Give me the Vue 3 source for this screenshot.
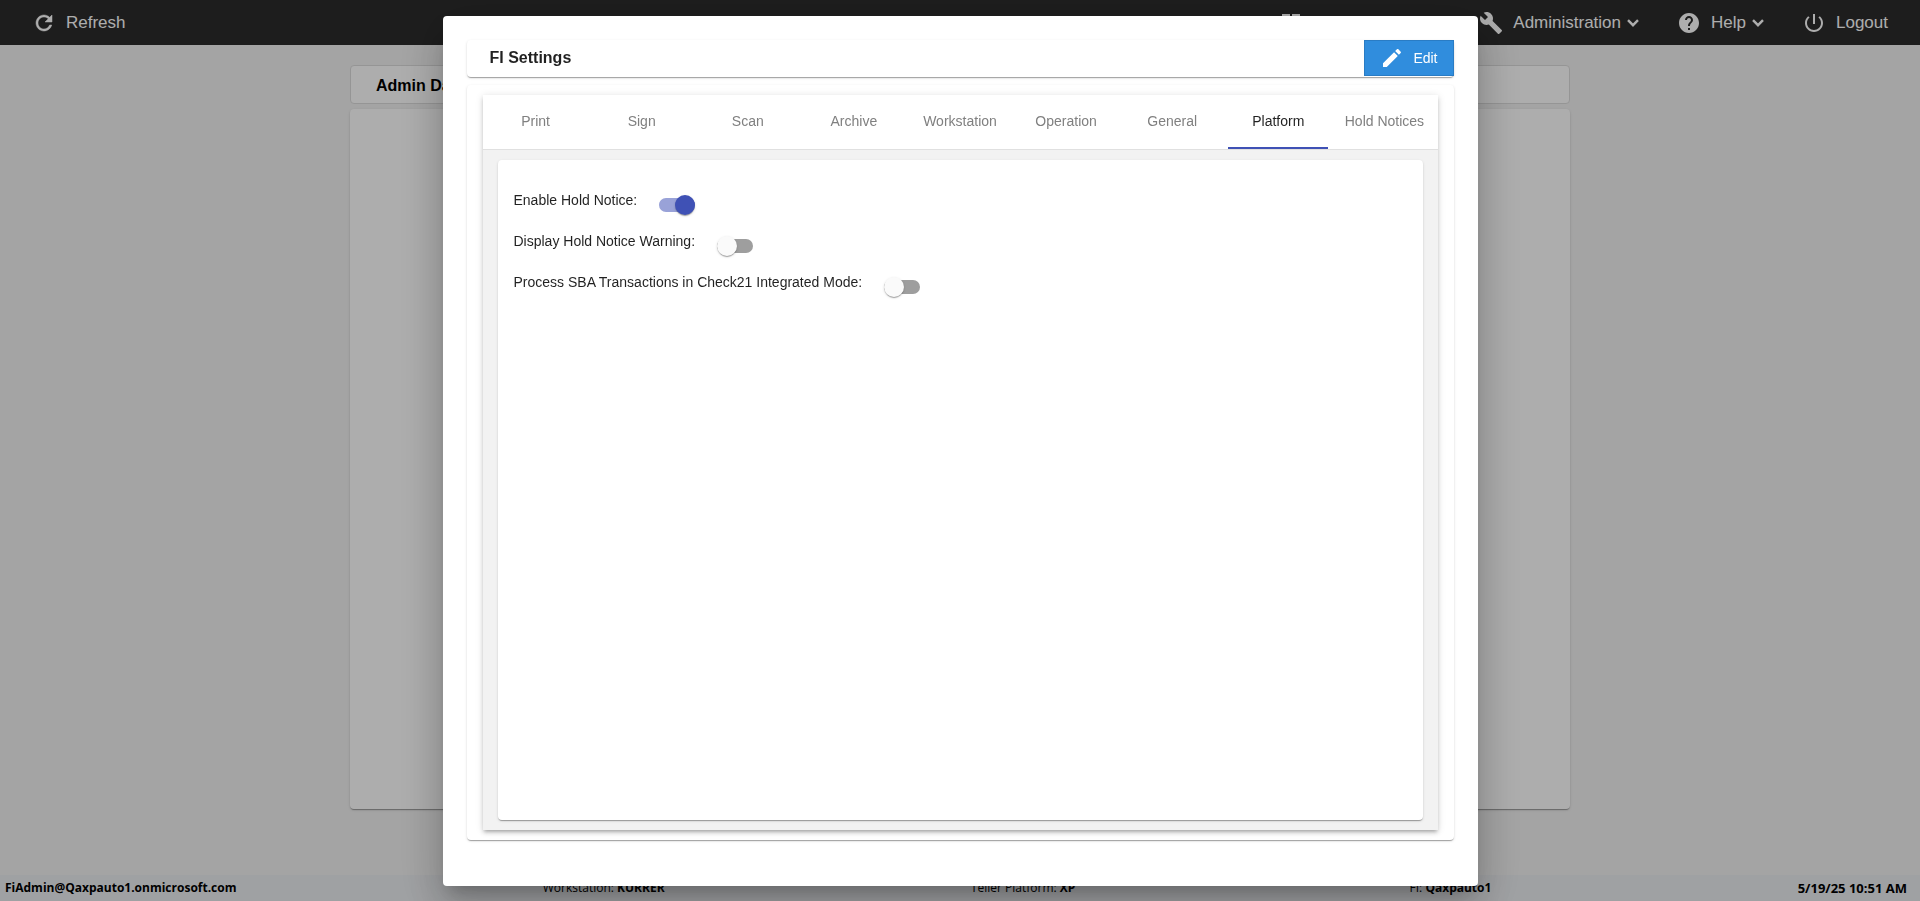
<template>
  <div class="app">
    <header class="topbar">
      <button class="topbar-item" type="button">
        <svg class="topbar-icon topbar-icon--bold" viewBox="0 0 24 24"><path :d="icons.refresh" /></svg>
        <span>Refresh</span>
      </button>
      <nav class="topbar-nav">
        <button v-for="item in menu" :key="item.label" class="topbar-item" type="button">
          <svg class="topbar-icon" viewBox="0 0 24 24"><path :d="icons[item.icon]" /></svg>
          <span>{{ item.label }}</span>
          <svg v-if="item.dropdown" class="topbar-chevron" viewBox="0 0 12 8">
            <path d="M1 1.200 6 6.200 11 1.200" />
          </svg>
        </button>
      </nav>
    </header>

    <main class="page">
      <h1 class="page-title">Admin Dashboard</h1>
      <div class="page-body"></div>
    </main>

    <footer class="statusbar">
      <b>FiAdmin@Qaxpauto1.onmicrosoft.com</b>
      <span>Workstation: <b>KURRER</b></span>
      <span>Teller Platform: <b>XP</b></span>
      <span class="statusbar-fi">FI: <b>Qaxpauto1</b></span>
      <b class="statusbar-time">5/19/25 10:51 AM</b>
    </footer>

    <div class="overlay">
      <section class="dialog" role="dialog" aria-labelledby="dialog-title">
        <div class="dialog-header">
          <h2 id="dialog-title" class="dialog-title">FI Settings</h2>
          <button class="edit-button" type="button">
            <svg class="edit-icon" viewBox="0 0 24 24"><path :d="icons.edit" /></svg>
            <span>Edit</span>
          </button>
        </div>

        <div class="dialog-body">
          <div class="tabs">
            <div class="tab-list" role="tablist">
              <button
                v-for="tab in tabs"
                :key="tab"
                class="tab"
                :class="{ 'tab--active': tab === activeTab }"
                type="button"
                role="tab"
                :aria-selected="tab === activeTab"
                @click="activeTab = tab"
              >
                {{ tab }}
              </button>
            </div>
            <div class="tab-content">
              <div class="settings">
                <template v-if="activeTab === 'Platform'">
                  <div v-for="setting in settings" :key="setting.id" class="setting">
                    <label :for="setting.id">{{ setting.label }}</label>
                    <input :id="setting.id" v-model="setting.enabled" class="toggle" type="checkbox" role="switch" />
                  </div>
                </template>
              </div>
            </div>
          </div>
        </div>
      </section>
    </div>
  </div>
</template>

<script setup>
import { reactive, ref } from 'vue';

const icons = {
  refresh: 'M17.65 6.35C16.2 4.9 14.21 4 12 4c-4.42 0-7.99 3.58-7.99 8s3.57 8 7.99 8c3.73 0 6.84-2.55 7.73-6h-2.08c-.82 2.33-3.04 4-5.65 4-3.31 0-6-2.69-6-6s2.69-6 6-6c1.66 0 3.14.69 4.22 1.78L13 11h7V4l-2.35 2.35z',
  dashboard: 'M3 13h8V3H3v10zm0 8h8v-6H3v6zm10 0h8V11h-8v10zm0-18v6h8V3h-8z',
  build: 'M22.7 19l-9.1-9.1c.9-2.3.4-5-1.500-6.900-2-2-5-2.400-7.400-1.300L9 6 6 9 1.600 4.700C.4 7.100.9 10.100 2.900 12.100c1.900 1.900 4.600 2.400 6.900 1.500l9.100 9.100c.4.4 1 .4 1.400 0l2.300-2.300c.5-.4.5-1.100.1-1.400z',
  help: 'M12 2C6.48 2 2 6.480 2 12s4.480 10 10 10 10-4.480 10-10S17.520 2 12 2zm1 17h-2v-2h2v2zm2.070-7.750l-.9.92C13.450 12.900 13 13.500 13 15h-2v-.5c0-1.100.45-2.100 1.170-2.830l1.240-1.260c.37-.36.59-.86.59-1.410 0-1.100-.9-2-2-2s-2 .9-2 2H8c0-2.210 1.790-4 4-4s4 1.790 4 4c0 .88-.36 1.680-.93 2.250z',
  power: 'M13 3h-2v10h2V3zm4.830 2.170l-1.420 1.420C17.990 7.860 19 9.810 19 12c0 3.870-3.130 7-7 7s-7-3.130-7-7c0-2.190 1.010-4.140 2.580-5.420L6.170 5.170C4.230 6.820 3 9.260 3 12c0 4.970 4.030 9 9 9s9-4.030 9-9c0-2.740-1.230-5.180-3.170-6.830z',
  edit: 'M3 17.250V21h3.750L17.810 9.940l-3.750-3.750L3 17.250zM20.710 7.040c.39-.39.39-1.020 0-1.410l-2.340-2.340c-.39-.39-1.020-.39-1.410 0l-1.830 1.830 3.750 3.750 1.830-1.830z'
};

const menu = [
  { label: 'Teller Dashboard', icon: 'dashboard' },
  { label: 'Administration', icon: 'build', dropdown: true },
  { label: 'Help', icon: 'help', dropdown: true },
  { label: 'Logout', icon: 'power' }
];

const tabs = ['Print', 'Sign', 'Scan', 'Archive', 'Workstation', 'Operation', 'General', 'Platform', 'Hold Notices'];
const activeTab = ref('Platform');

const settings = reactive([
  { id: 'hold-notice', label: 'Enable Hold Notice:', enabled: true },
  { id: 'hold-notice-warning', label: 'Display Hold Notice Warning:', enabled: false },
  { id: 'sba-transactions', label: 'Process SBA Transactions in Check21 Integrated Mode:', enabled: false }
]);
</script>

<style>
body {
  margin: 0;
}
</style>

<style scoped>
.app {
  display: flex;
  flex-direction: column;
  min-height: 100vh;
  background-color: #f2f2f2;
  font-family: "Liberation Sans", Arial, sans-serif;
  color: rgba(0, 0, 0, 0.87);
}

button {
  border: 0;
  background: none;
  font-family: inherit;
  cursor: pointer;
}

.topbar {
  display: flex;
  justify-content: space-between;
  height: 45px;
  padding: 0 32px;
  background-color: #2c2c2c;
}

.topbar-nav {
  display: flex;
  gap: 38px;
}

.topbar-item {
  display: flex;
  align-items: center;
  padding: 0;
  font-size: 17px;
  color: #ffffff;
}

.topbar-icon {
  width: 24px;
  height: 24px;
  margin-right: 10px;
  fill: currentColor;
}

.topbar-icon--bold {
  stroke: currentColor;
  stroke-width: 0.5;
}

.topbar-chevron {
  width: 12px;
  height: 8px;
  margin-left: 6px;
  fill: none;
  stroke: currentColor;
  stroke-width: 2.4;
}

.page {
  display: flex;
  flex: 1;
  flex-direction: column;
  gap: 5px;
  width: 100%;
  max-width: 1220px;
  margin: 0 auto;
  padding: 20px 0 66px;
}

.page-title {
  box-sizing: border-box;
  height: 39px;
  margin: 0;
  padding: 0 25px;
  border: 1px solid #dcdcdc;
  border-radius: 4px;
  background-color: #ffffff;
  font-size: 16px;
  line-height: 40px;
  color: #000000;
}

.page-body {
  flex: 1;
  border-radius: 4px;
  background-color: #ffffff;
  box-shadow: 0 2px 1px -1px rgba(0, 0, 0, 0.2), 0 1px 1px 0 rgba(0, 0, 0, 0.14), 0 1px 3px 0 rgba(0, 0, 0, 0.12);
}

.statusbar {
  display: flex;
  justify-content: space-between;
  height: 26px;
  padding: 0 13px 0 5px;
  background-color: #ebedf0;
  font-family: "Open Sans", "Noto Sans", sans-serif;
  font-size: 12px;
  line-height: 26px;
  color: #000000;
}

.statusbar-fi {
  margin-left: 28px;
}

.statusbar-time {
  font-size: 13px;
}

.overlay {
  position: fixed;
  inset: 0;
  display: flex;
  align-items: center;
  justify-content: center;
  background-color: rgba(0, 0, 0, 0.32);
}

.dialog {
  box-sizing: border-box;
  display: flex;
  flex-direction: column;
  gap: 8px;
  width: 100%;
  max-width: 1035px;
  height: calc(100vh - 31px);
  padding: 24px 24px 46px;
  border-radius: 4px;
  background-color: #ffffff;
  box-shadow: 0 11px 15px -7px rgba(0, 0, 0, 0.2), 0 24px 38px 3px rgba(0, 0, 0, 0.14), 0 9px 46px 8px rgba(0, 0, 0, 0.12);
}

.dialog-header,
.dialog-body,
.settings {
  border-radius: 4px;
  background-color: #ffffff;
  box-shadow: 0 2px 1px -1px rgba(0, 0, 0, 0.2), 0 1px 1px 0 rgba(0, 0, 0, 0.14), 0 1px 3px 0 rgba(0, 0, 0, 0.12);
}

.dialog-header {
  display: flex;
  align-items: flex-start;
  justify-content: space-between;
  height: 37px;
  padding-left: 23px;
}

.dialog-title {
  margin: 0;
  font-size: 16px;
  line-height: 36px;
}

.edit-button {
  display: flex;
  align-items: center;
  gap: 9px;
  height: 36px;
  padding: 0 15px;
  border: 1px solid #2a7cc4;
  background-color: #308ddd;
  font-size: 14px;
  color: #ffffff;
}

.edit-icon {
  width: 24px;
  height: 24px;
  fill: currentColor;
}

.dialog-body {
  display: flex;
  flex: 1;
  padding: 10px 16px;
}

.tabs {
  display: flex;
  flex: 1;
  flex-direction: column;
  background-color: #f2f2f2;
  box-shadow: 0 3px 3px -2px rgba(0, 0, 0, 0.2), 0 3px 4px 0 rgba(0, 0, 0, 0.14), 0 1px 8px 0 rgba(0, 0, 0, 0.12);
}

.tab-list {
  display: flex;
  height: 54px;
  border-bottom: 1px solid #e0e0e0;
  background-color: #ffffff;
}

.tab {
  flex: 1 1 0;
  min-width: 0;
  margin: 0 3px;
  padding: 0;
  border-bottom: 2px solid transparent;
  font-size: 14px;
  color: #808080;
  white-space: nowrap;
}

.tab--active {
  border-bottom-color: #3f51b5;
  color: rgba(0, 0, 0, 0.87);
}

.tab-content {
  display: flex;
  flex: 1;
  padding: 10px 15px;
}

.settings {
  display: flex;
  flex: 1;
  flex-direction: column;
  padding: 30px 16px;
}

.setting {
  display: flex;
  align-items: flex-start;
  gap: 22px;
  height: 41px;
  font-size: 14px;
  line-height: 20px;
}

.toggle {
  display: flex;
  width: 36px;
  height: 14px;
  margin: 8px 0 0;
  border-radius: 8px;
  background-color: #9e9e9e;
  appearance: none;
  cursor: pointer;
}

.toggle::before {
  content: "";
  width: 20px;
  height: 20px;
  margin-top: -3px;
  border-radius: 50%;
  background-color: #fafafa;
  box-shadow: 0 2px 1px -1px rgba(0, 0, 0, 0.2), 0 1px 1px 0 rgba(0, 0, 0, 0.14), 0 1px 3px 0 rgba(0, 0, 0, 0.12);
}

.toggle:checked {
  background-color: #99a2d8;
}

.toggle:checked::before {
  margin-left: 16px;
  background-color: #3f51b5;
}
</style>
